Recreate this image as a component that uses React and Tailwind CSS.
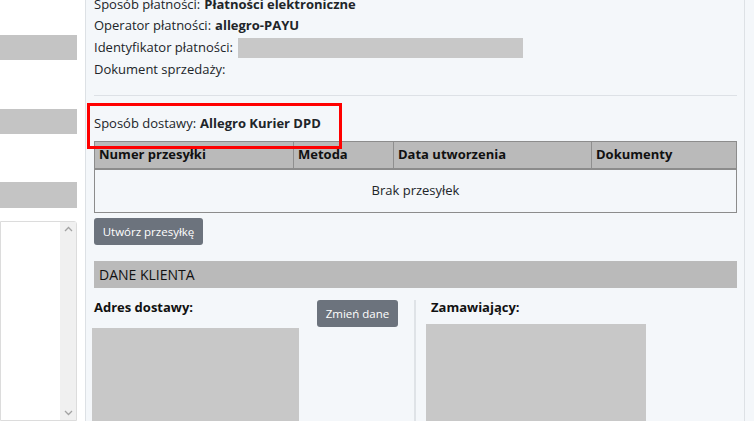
import React from "react";

const columns = [
  { label: "Numer przesyłki", w: "w-[198px]" },
  { label: "Metoda", w: "w-[100px]" },
  { label: "Data utworzenia", w: "w-[198px]" },
  { label: "Dokumenty", w: "flex-1" },
];

function LeftPanel() {
  return (
    <div className="w-[85px] shrink-0 bg-white flex flex-col">
      <div className="w-[77px] h-[25px] mt-[35px] bg-[#c4c4c4]" />
      <div className="w-[77px] h-[25px] mt-[49px] bg-[#c4c4c4]" />
      <div className="w-[77px] h-[26px] mt-[48px] bg-[#c4c4c4]" />
      <div className="w-[77px] flex-1 mt-[13px] border border-[#dcdcdc] rounded-tr-[3px] flex justify-end">
        <div className="w-[16px] bg-[#f0f0f0] flex flex-col items-center justify-between py-[4px]">
          <svg width="9" height="6" viewBox="0 0 9 6">
            <path d="M1 5 L4.5 1.5 L8 5" fill="none" stroke="#a3a3a3" strokeWidth="1.3" />
          </svg>
          <svg width="9" height="6" viewBox="0 0 9 6">
            <path d="M1 1 L4.5 4.5 L8 1" fill="none" stroke="#a3a3a3" strokeWidth="1.3" />
          </svg>
        </div>
      </div>
    </div>
  );
}

function InfoRow({ label, value, children, h = "h-[21px]" }) {
  return (
    <div className={`${h} flex items-center`}>
      <span>{label}</span>
      {value && <span className="font-bold ml-[4px]">{value}</span>}
      {children}
    </div>
  );
}

export default function App() {
  return (
    <div
      className="w-[754px] h-[421px] overflow-hidden flex text-[13px] text-[#212529] bg-[#f4f7fa]"
      style={{ fontFamily: '"Open Sans", "Liberation Sans", sans-serif' }}
    >
      <LeftPanel />
      <div className="relative w-[660px] shrink-0 border-l border-r border-[#dde1e5] bg-[#f4f7fa] pl-[8px] pr-[7px] flex flex-col">
        <div className="-mt-[6px]">
          <InfoRow label="Sposób płatności:" value="Płatności elektroniczne" />
          <InfoRow label="Operator płatności:" value="allegro-PAYU" />
          <InfoRow label="Identyfikator płatności:" h="h-[23px]">
            <div className="ml-[5px] w-[285px] h-[20px] bg-[#c8c8c8]" />
          </InfoRow>
          <InfoRow label="Dokument sprzedaży:" />
        </div>
        <div className="mt-[15px] h-px bg-[#dde1e6]" />

        <div className="mt-[17px] h-[21px] flex items-center">
          <span>Sposób dostawy:</span>
          <span className="font-bold ml-[4px]">Allegro Kurier DPD</span>
        </div>
        <div className="absolute left-[1px] top-[103px] w-[255px] h-[46px] border-[3px] border-[#ff0000] z-10" />

        <div className="mt-[7px] border border-[#8c8c8c]">
          <div className="flex h-[28px] bg-[#bababa] border-b-2 border-[#8c8c8c]">
            {columns.map((c, i) => (
              <div
                key={c.label}
                className={`${c.w} ${i > 0 ? "border-l border-[#8f8f8f]" : ""} pl-[4px] flex items-center font-bold text-[#111]`}
              >
                {c.label}
              </div>
            ))}
          </div>
          <div className="h-[42px] flex items-center justify-center">Brak przesyłek</div>
        </div>

        <div className="mt-[5px]">
          <button className="h-[27px] w-[109px] rounded-[3px] bg-[#6c737d] text-white text-[11.5px]">
            Utwórz przesyłkę
          </button>
        </div>

        <div className="mt-[16px] h-[27px] bg-[#bababa] pl-[5px] flex items-center text-[14px] text-[#111]">
          DANE KLIENTA
        </div>

        <div className="flex mt-[12px] flex-1">
          <div className="w-[320px] flex flex-col">
            <div className="flex justify-between">
              <div className="leading-[15px] font-bold text-[#111]">Adres dostawy:</div>
              <button className="mr-[16px] h-[27px] w-[81px] rounded-[3px] bg-[#6c737d] text-white text-[11.5px]">
                Zmień dane
              </button>
            </div>
            <div className="-ml-[2px] mt-[1px] w-[207px] flex-1 bg-[#c8c8c8]" />
          </div>
          <div className="w-[2px] bg-[#dfe3e7]" />
          <div className="flex flex-col pl-[10px]">
            <div className="leading-[15px] pl-[5px] font-bold text-[#111]">Zamawiający:</div>
            <div className="mt-[9px] w-[220px] flex-1 bg-[#c8c8c8]" />
          </div>
        </div>
      </div>
      <div className="flex-1 bg-[#f4f7fa]" />
    </div>
  );
}
